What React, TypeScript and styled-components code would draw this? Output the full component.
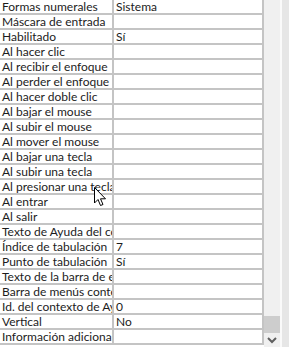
import React from 'react';
import styled, {createGlobalStyle} from 'styled-components';

const GlobalStyle = createGlobalStyle`
  html, body {
    margin: 0;
    padding: 0;
    background: #ffffff;
    overflow: hidden;
  }
`

type PropRow = {
    label: string
    value?: string
}

const rows: PropRow[] = [
    {label: 'Formas numerales', value: 'Sistema'},
    {label: 'Máscara de entrada'},
    {label: 'Habilitado', value: 'Sí'},
    {label: 'Al hacer clic'},
    {label: 'Al recibir el enfoque'},
    {label: 'Al perder el enfoque'},
    {label: 'Al hacer doble clic'},
    {label: 'Al bajar el mouse'},
    {label: 'Al subir el mouse'},
    {label: 'Al mover el mouse'},
    {label: 'Al bajar una tecla'},
    {label: 'Al subir una tecla'},
    {label: 'Al presionar una tecla'},
    {label: 'Al entrar'},
    {label: 'Al salir'},
    {label: 'Texto de Ayuda del control'},
    {label: 'Índice de tabulación', value: '7'},
    {label: 'Punto de tabulación', value: 'Sí'},
    {label: 'Texto de la barra de estado'},
    {label: 'Barra de menús contextual'},
    {label: 'Id. del contexto de Ayuda', value: '0'},
    {label: 'Vertical', value: 'No'},
    {label: 'Información adicional'},
]

export default function App() {
    return (
        <>
            <GlobalStyle/>
            <Sheet>
                <Grid>
                    {rows.map((r, i) => (
                        <Row key={i}>
                            <Label>{r.label}</Label>
                            <Value>{r.value ?? ''}</Value>
                        </Row>
                    ))}
                </Grid>
                <ScrollBar>
                    <Track/>
                    <Thumb/>
                    <ArrowDown>
                        <svg width="10" height="7" viewBox="0 0 10 7">
                            <path d="M1 1 L5 5 L9 1" fill="none" stroke="#5f5f5f" strokeWidth="2"/>
                        </svg>
                    </ArrowDown>
                </ScrollBar>
                <Edge/>
                <Pointer>
                    <svg width="13" height="20" viewBox="0 0 13 20">
                        <path d="M0.5 0.5 L0.5 16 L4 12.5 L6.5 18.5 L9 17.5 L6.5 11.8 L11.5 11.8 Z"
                              fill="#ffffff" stroke="#000000" strokeWidth="1" strokeLinejoin="miter"/>
                    </svg>
                </Pointer>
            </Sheet>
        </>
    );
}

const Sheet = styled.div`
  position: relative;
  display: flex;
  width: 289px;
  height: 347px;
  overflow: hidden;
  font-family: Lato, "Open Sans", sans-serif;
  font-size: 12px;
  color: #1c1c1c;
`

const Grid = styled.div`
  display: flex;
  flex-direction: column;
  width: 264px;
`

const Row = styled.div`
  display: flex;
  height: 13px;
  border-bottom: 2px solid #c4c4c4;
  flex-shrink: 0;
`

const Cell = styled.div`
  padding-left: 2px;
  border-right: 2px solid #c4c4c4;
  line-height: 13px;
  white-space: nowrap;
  overflow: hidden;
`

const Label = styled(Cell)`
  width: 110px;
`

const Value = styled(Cell)`
  width: 146px;
`

const ScrollBar = styled.div`
  display: flex;
  flex-direction: column;
  width: 16px;
  background: #f0f0f0;
`

const Track = styled.div`
  flex: 1;
`

const Thumb = styled.div`
  height: 17px;
  background: #cdcdcd;
`

const ArrowDown = styled.div`
  height: 14px;
  display: flex;
  align-items: center;
  justify-content: center;
`

const Edge = styled.div`
  width: 7px;
  border-left: 2px solid #fafafa;
  background: #e6e6e6;
`

const Pointer = styled.div`
  position: absolute;
  left: 94px;
  top: 187px;
  line-height: 0;
`
